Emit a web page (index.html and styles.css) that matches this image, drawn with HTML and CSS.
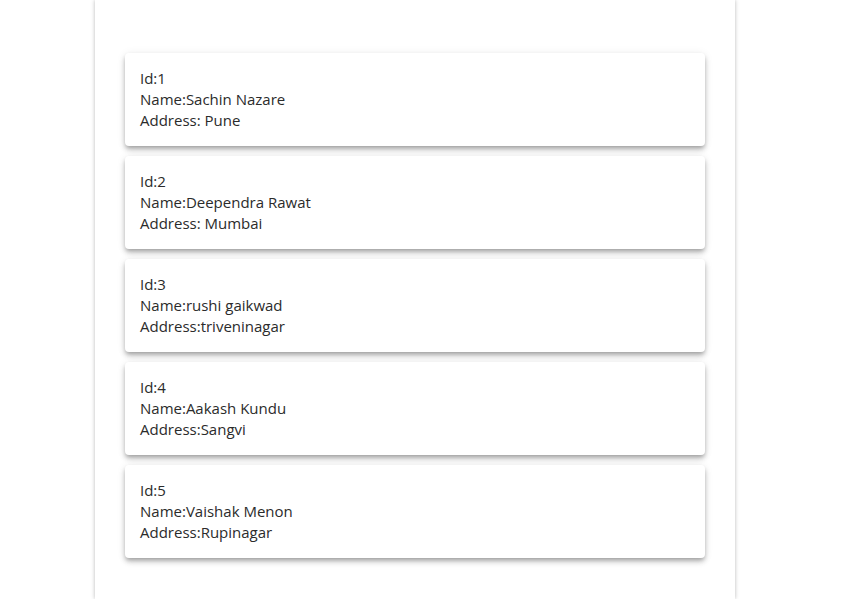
FILE: index.html
```html
<!DOCTYPE html>
<html>
<head>
<meta charset="utf-8">
<link rel="stylesheet" href="styles.css">
</head>
<body>
<div class="page">
  <div class="list">
    <div class="card"><div>Id:1</div><div>Name:Sachin Nazare</div><div>Address: Pune</div></div>
    <div class="card"><div>Id:2</div><div>Name:Deependra Rawat</div><div>Address: Mumbai</div></div>
    <div class="card"><div>Id:3</div><div>Name:rushi gaikwad</div><div>Address:triveninagar</div></div>
    <div class="card"><div>Id:4</div><div>Name:Aakash Kundu</div><div>Address:Sangvi</div></div>
    <div class="card"><div>Id:5</div><div>Name:Vaishak Menon</div><div>Address:Rupinagar</div></div>
  </div>
</div>
</body>
</html>
```
FILE: styles.css
```css
html, body {
  margin: 0;
  padding: 0;
  background: #fff;
}
body {
  font-family: "Open Sans", "Noto Sans", sans-serif;
  font-size: 15px;
  color: #2b2b2b;
}
.page {
  width: 640px;
  margin-left: 95px;
  min-height: 599px;
  box-sizing: border-box;
  padding: 53px 30px 30px;
  box-shadow: 0 0 4px rgba(0,0,0,0.28);
  background: #fff;
}
.list {
  display: flex;
  flex-direction: column;
  gap: 10px;
}
.card {
  height: 93px;
  box-sizing: border-box;
  padding: 15px 15px;
  border-radius: 4px;
  background: #fff;
  line-height: 21px;
  box-shadow: 0 3px 4px -1px rgba(0,0,0,0.25), 0 4px 6px rgba(0,0,0,0.14), 0 1px 10px rgba(0,0,0,0.08);
}
```
